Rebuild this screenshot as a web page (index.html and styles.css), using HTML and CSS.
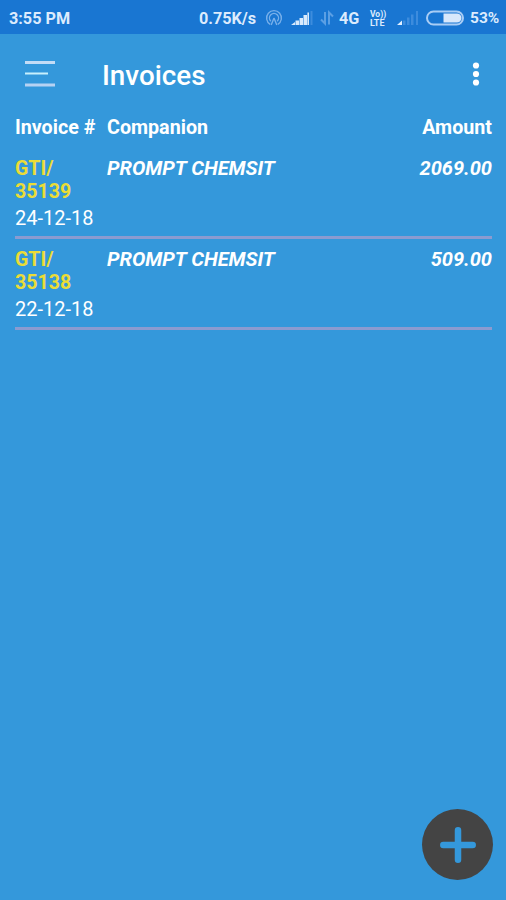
FILE: index.html
```html
<!DOCTYPE html>
<html lang="en">
<head>
    <meta charset="UTF-8">
    <meta name="viewport" content="width=device-width, initial-scale=1.0">
    <title>Invoices</title>
    <link rel="stylesheet" href="styles.css">
</head>
<body>
    <div class="status-bar">
        <span class="time">3:55 PM</span>
        <span class="speed">0.75K/s</span>
        <svg class="hotspot" width="18" height="18" viewBox="0 0 18 18" fill="none" stroke="#78b0ea" stroke-width="1.4">
            <path d="M5.2 15.4A7.4 7.4 0 1 1 12.8 15.4"/>
            <path d="M5.8 12.2A4.5 4.5 0 1 1 12.2 12.2"/>
            <path d="M9 9L6.2 16M9 9L11.800 16"/>
        </svg>
        <svg class="signal" width="22" height="16" viewBox="0 0 22 16" fill="#d8eafc">
            <path d="M0 15L4 12V15ZM4.5 10.500h3.500V15H4.500ZM8.500 8h3.500V15H8.500ZM12.500 5h3.500V15h-3.500Z"/>
            <path d="M16.4 2.5h1.6V15h-1.6Z"/>
            <path d="M19.5 1h2v14h-2Z" fill="#3d8cdd"/>
        </svg>
        <svg class="arrows" width="14" height="16" viewBox="0 0 14 16" fill="none" stroke="#5b9fe4" stroke-width="2">
            <path d="M5 2V13.5L1 9.5"/>
            <path d="M9 14.5V2.5L13 6.5"/>
        </svg>
        <span class="network">4G</span>
        <span class="volte"><span>Vo))</span><span class="lte">LTE</span></span>
        <svg class="signal-two" width="22" height="16" viewBox="0 0 22 16" fill="#3d8cdd">
            <path d="M0 15L5 10.5V15Z" fill="#e2f0ff"/>
            <path d="M6 10.5h2.5V15H6ZM10 7.5h2.5V15H10ZM14 4.5h2.5V15H14ZM19 1h2v14h-2Z"/>
        </svg>
        <svg class="battery" width="38" height="16" viewBox="0 0 38 16">
            <rect x="1" y="1.5" width="36" height="13" rx="6.5" fill="none" stroke="#a9cdf5" stroke-width="2"/>
            <path d="M17.5 3.5H31a4.5 4.5 0 0 1 0 9H17.5Z" fill="#d8e8fb"/>
        </svg>
        <span class="percent">53%</span>
    </div>

    <div class="toolbar">
        <svg class="menu-icon" width="30" height="28" viewBox="0 0 30 28">
            <path d="M0 2.5H30" stroke="#c3dcf6" stroke-width="3"/>
            <path d="M0 13.5H23" stroke="#c8f0fd" stroke-width="2"/>
            <path d="M0 25H30" stroke="#b6d2f3" stroke-width="3"/>
        </svg>
        <h1>Invoices</h1>
        <svg class="more-icon" width="8" height="24" viewBox="0 0 8 24" fill="#fff">
            <circle cx="4" cy="3.5" r="3.1"/>
            <circle cx="4" cy="12" r="3.1"/>
            <circle cx="4" cy="20.5" r="3.1"/>
        </svg>
    </div>

    <div class="list">
        <div class="row list-header">
            <div>Invoice #</div>
            <div>Companion</div>
            <div class="amount">Amount</div>
        </div>
        <div class="row item">
            <div>
                <div class="number">GTI/<br>35139</div>
                <div class="date">24-12-18</div>
            </div>
            <div class="company">PROMPT CHEMSIT</div>
            <div class="amount">2069.00</div>
        </div>
        <div class="row item">
            <div>
                <div class="number">GTI/<br>35138</div>
                <div class="date">22-12-18</div>
            </div>
            <div class="company">PROMPT CHEMSIT</div>
            <div class="amount">509.00</div>
        </div>
    </div>

    <button class="add-button" aria-label="Add invoice">
        <svg width="36" height="36" viewBox="0 0 36 36" stroke="#3498db" stroke-width="6.5" stroke-linecap="round">
            <path d="M18 3.3V32.7M3.3 18H32.7"/>
        </svg>
    </button>
</body>
</html>
```

FILE: styles.css
```css
body {
    margin: 0;
    min-height: 900px;
    background-color: #3498db;
    color: #fff;
    font-family: Roboto, sans-serif;
}

svg {
    display: block;
    flex-shrink: 0;
}

/* Status bar */
.status-bar {
    display: flex;
    align-items: center;
    box-sizing: border-box;
    height: 34px;
    padding: 2px 0 0 9px;
    background-color: #1976d2;
    color: #dcebfd;
    font-size: 16.2px;
    font-weight: 700;
    line-height: 21px;
    white-space: nowrap;
}

.time {
    width: 190px;
}

.speed {
    width: 66px;
}

.signal {
    margin-left: 8px;
}

.arrows {
    margin-left: 7px;
}

.network {
    width: 31px;
    margin-left: 5px;
}

.volte {
    display: flex;
    flex-direction: column;
    gap: 1px;
    width: 27px;
    font-size: 8.5px;
    line-height: 8px;
}

.lte {
    font-size: 9px;
}

.battery {
    margin-left: 7px;
}

.percent {
    margin-left: 6px;
    font-size: 15.5px;
}

/* Toolbar */
.toolbar {
    display: flex;
    align-items: center;
    height: 80px;
    padding: 0 26px 0 25px;
}

.toolbar h1 {
    flex: 1;
    margin: 3px 0 0 47px;
    font-size: 27.8px;
    font-weight: 500;
    line-height: 32px;
}

/* Invoice list */
.list {
    padding: 0 14px 0 15px;
    font-size: 20px;
    line-height: 23px;
}

.row {
    display: grid;
    grid-template-columns: 92px 1fr auto;
}

.list-header {
    height: 43px;
    padding-top: 2px;
    box-sizing: border-box;
    font-size: 19.7px;
    font-weight: 700;
}

.item {
    box-sizing: border-box;
    height: 82px;
    margin-bottom: 9px;
    border-bottom: 3px solid #8b9bd0;
}

.number {
    color: #ebdc36;
    font-size: 19.6px;
    font-weight: 700;
}

.date {
    margin-top: 4px;
}

.company,
.item .amount {
    font-style: italic;
    font-weight: 700;
}

.amount {
    text-align: right;
}

/* Floating button stays over the list */
.add-button {
    position: absolute;
    right: 13px;
    bottom: 20px;
    display: flex;
    align-items: center;
    justify-content: center;
    width: 71px;
    height: 71px;
    padding: 0;
    border: none;
    border-radius: 50%;
    background-color: #444;
}
```
